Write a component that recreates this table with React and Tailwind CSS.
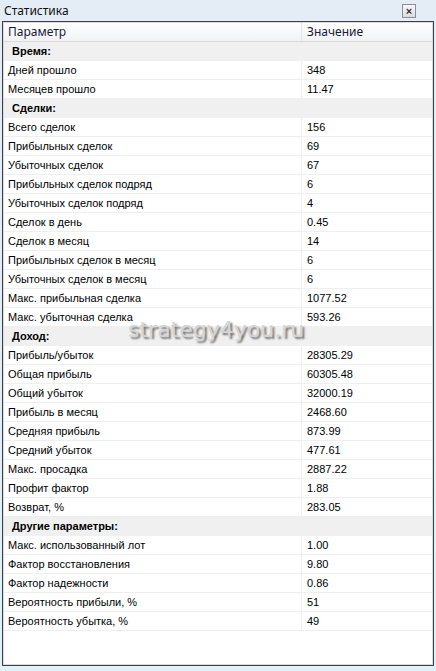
import React from 'react'

const data = [
  { section: 'Время:' },
  ['Дней прошло', '348'],
  ['Месяцев прошло', '11.47'],
  { section: 'Сделки:' },
  ['Всего сделок', '156'],
  ['Прибыльных сделок', '69'],
  ['Убыточных сделок', '67'],
  ['Прибыльных сделок подряд', '6'],
  ['Убыточных сделок подряд', '4'],
  ['Сделок в день', '0.45'],
  ['Сделок в месяц', '14'],
  ['Прибыльных сделок в месяц', '6'],
  ['Убыточных сделок в месяц', '6'],
  ['Макс. прибыльная сделка', '1077.52'],
  ['Макс. убыточная сделка', '593.26'],
  { section: 'Доход:' },
  ['Прибыль/убыток', '28305.29'],
  ['Общая прибыль', '60305.48'],
  ['Общий убыток', '32000.19'],
  ['Прибыль в месяц', '2468.60'],
  ['Средняя прибыль', '873.99'],
  ['Средний убыток', '477.61'],
  ['Макс. просадка', '2887.22'],
  ['Профит фактор', '1.88'],
  ['Возврат, %', '283.05'],
  { section: 'Другие параметры:' },
  ['Макс. использованный лот', '1.00'],
  ['Фактор восстановления', '9.80'],
  ['Фактор надежности', '0.86'],
  ['Вероятность прибыли, %', '51'],
  ['Вероятность убытка, %', '49'],
]

const App = () => {
  return (
    <div className="w-[436px] h-[671px] bg-gradient-to-b from-[#e4edf5] via-[#e2ecf4] to-[#dff2f8] flex flex-col" style={{ fontFamily: '"Liberation Sans", Arial, sans-serif' }}>
      {/* title bar */}
      <div className="h-[21px] flex items-center justify-between pl-[4px] pr-[20px] shrink-0">
        <span className="text-[12px] text-[#111] leading-none" style={{ fontFamily: '"Noto Sans", "Open Sans", sans-serif' }}>Статистика</span>
        <div className="w-[14px] h-[14px] mt-[1px] border border-[#8a8f96] bg-gradient-to-b from-[#f8f8f8] to-[#d9dde2] flex items-center justify-center text-[11px] leading-none text-[#333] font-bold">
          ×
        </div>
      </div>

      {/* panel */}
      <div className="mx-[2px] h-[645px] border border-[#404040] relative">
        <div className="h-full border border-[#d6dbe2] bg-white flex flex-col">
          {/* header */}
          <div className="flex h-[19px] shrink-0 border-b border-[#d9d9d9] bg-gradient-to-b from-[#ffffff] to-[#f1f2f4] text-[12px] text-[#1a1a3a]" style={{ fontFamily: '"Noto Sans", "Open Sans", sans-serif' }}>
            <div className="w-[298px] pl-[4px] flex items-center border-r border-[#e3e3e3]">Параметр</div>
            <div className="flex-1 pl-[5px] flex items-center">Значение</div>
          </div>

          {data.map((row, i) =>
            row.section ? (
              <div key={i} className="h-[19px] shrink-0 bg-[#f0f0f0] pl-[8px] flex items-center text-[11px] font-bold text-black">
                {row.section}
              </div>
            ) : (
              <div key={i} className="h-[19px] shrink-0 flex border-b border-[#efefef] text-[11px] text-black">
                <div className="w-[298px] pl-[4px] flex items-center border-r border-[#efefef]">{row[0]}</div>
                <div className="flex-1 pl-[5px] flex items-center">{row[1]}</div>
              </div>
            )
          )}
        </div>

        {/* watermark */}
        <div className="absolute left-[125px] top-[291px] text-[22px] text-[#d4d4d4] pointer-events-none" style={{ fontFamily: '"DejaVu Sans", Verdana, sans-serif', textShadow: '2px 2px 2px #707070' }}>
          strategy4you.ru
        </div>
      </div>
    </div>
  )
}

export default App
